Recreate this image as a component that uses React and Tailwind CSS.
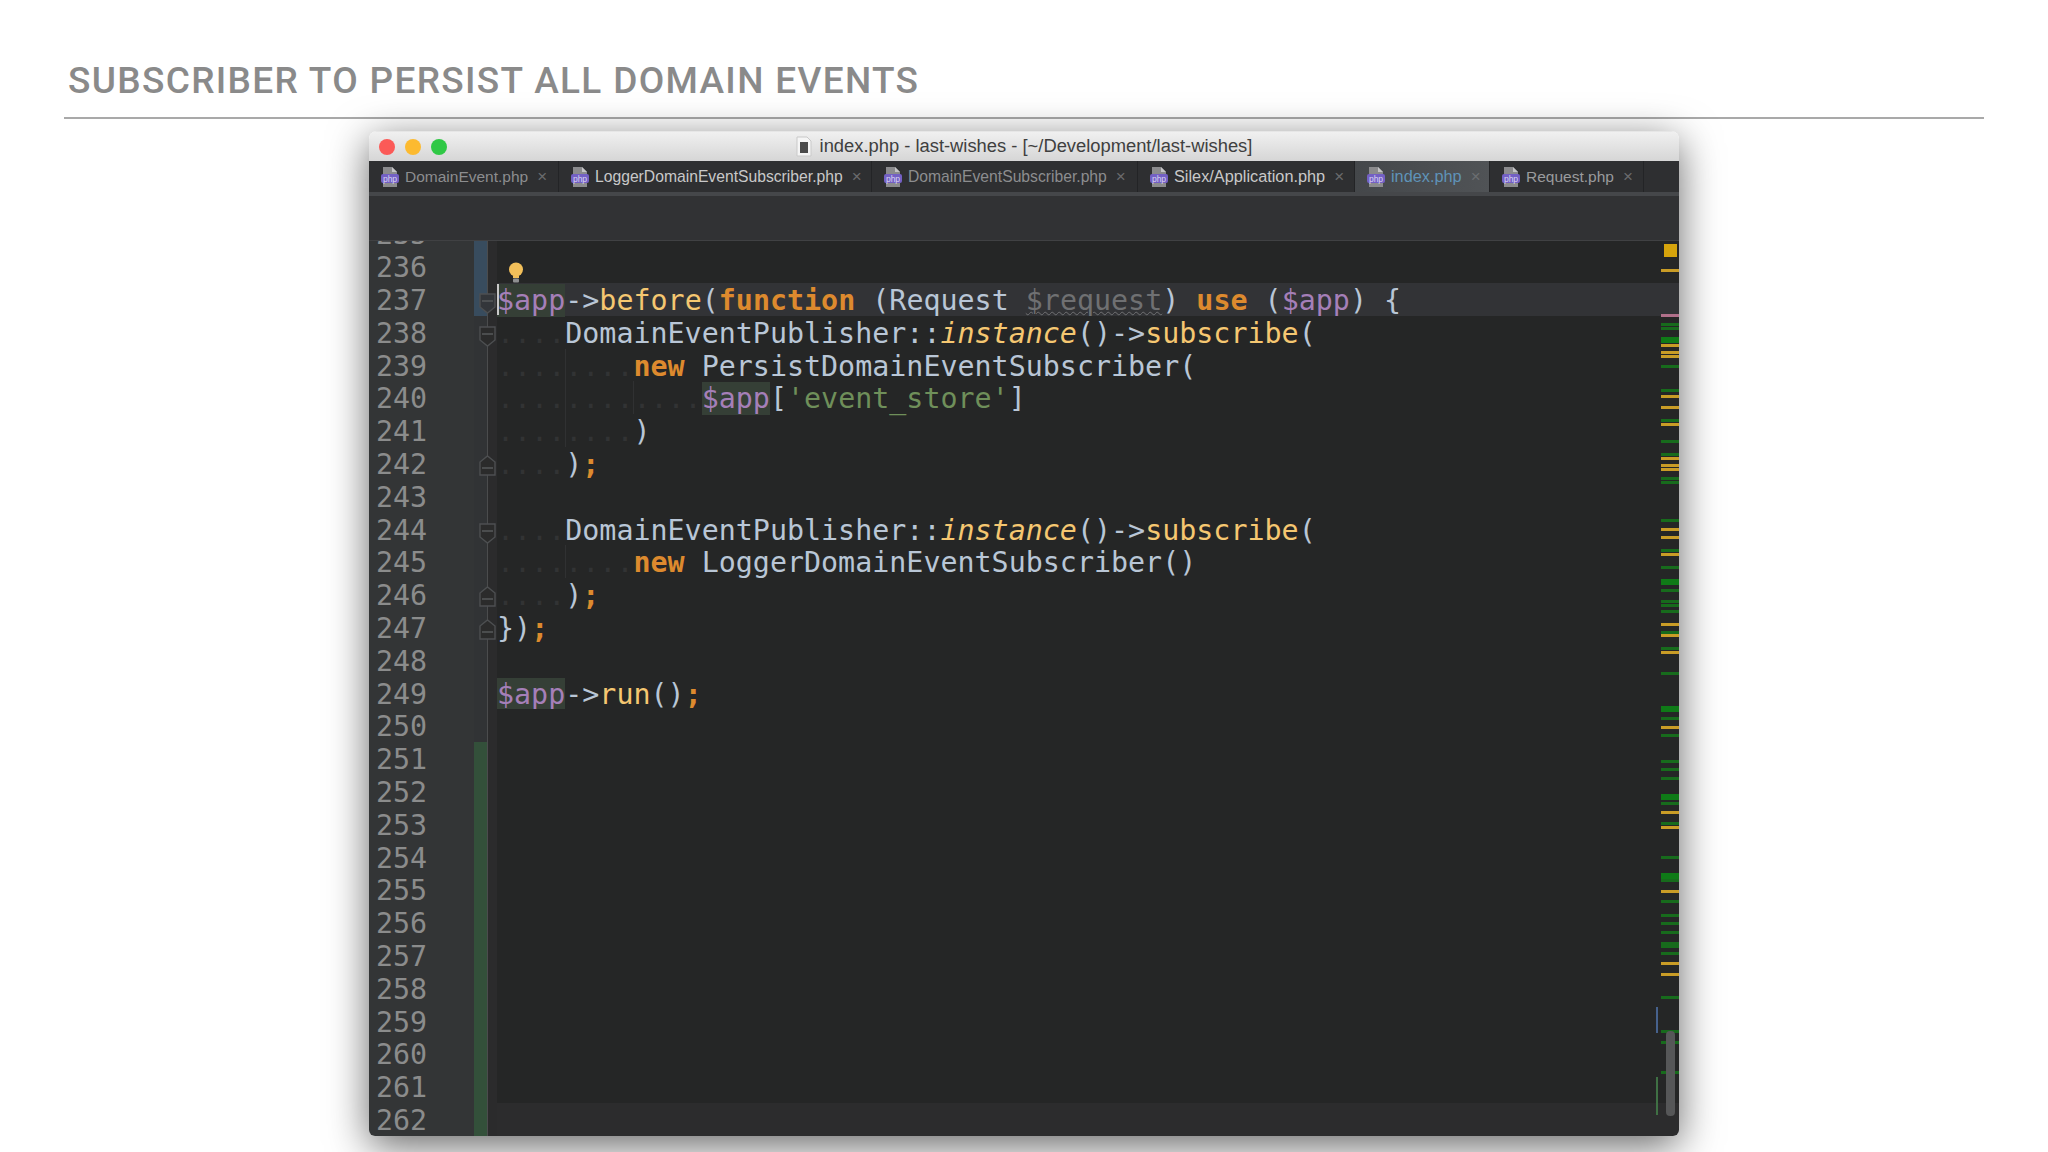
const tabs = [
  { name: "DomainEvent.php", w: "w-[190px]", size: "text-[15.5px]", text: "text-[#8c8d8f]" },
  { name: "LoggerDomainEventSubscriber.php", w: "w-[313px]", size: "text-[15.7px]", text: "text-[#c9c9c9]" },
  { name: "DomainEventSubscriber.php", w: "w-[266px]", size: "text-[15.7px]", text: "text-[#8c8d8f]" },
  { name: "Silex/Application.php", w: "w-[217px]", size: "text-[16.3px]", text: "text-[#c9c9c9]" },
  { name: "index.php", w: "w-[135px]", size: "text-[16.3px]", text: "text-[#5f93b8]", active: true },
  { name: "Request.php", w: "w-[154px]", size: "text-[15.5px]", text: "text-[#9a9b9d]" },
];

const yellowMarks = [270, 345, 352, 356, 396, 407, 424, 458, 465, 469, 529, 537, 554, 624, 635, 652, 727, 812, 827, 891, 963, 974];
const greenMarks = [324, 328, 366, 390, 420, 441, 454, 478, 482, 520, 550, 567, 590, 601, 605, 611, 632, 648, 673, 718, 735, 761, 769, 778, 803, 823, 857, 880, 901, 915, 923, 932, 943, 946, 953, 997, 1031, 1042, 1072];
const thickGreen = [337, 579, 706, 794, 873];

function PhpIcon() {
  return (
    <svg width="18" height="22" viewBox="0 0 18 22" className="shrink-0">
      <path d="M2 1h9l5 5v15H2z" fill="#8b8b8d" />
      <path d="M11 1v5h5z" fill="#c4c4c6" />
      <rect x="0" y="8" width="18" height="9" rx="2" fill="#7360c4" />
      <text x="9" y="15.500" textAnchor="middle" fontSize="8.500" fill="#d9d4f2" fontFamily="Liberation Sans, sans-serif">php</text>
    </svg>
  );
}

function Tab({ t }) {
  return (
    <div className={`${t.w} pl-[12px] h-full shrink-0 flex items-center border-r border-[#232426] ${t.active ? "bg-gradient-to-r from-[#44474a] to-[#505356]" : "bg-[#2e2f31]"}`}>
      <PhpIcon />
      <span className={`ml-[6px] ${t.size} leading-none whitespace-nowrap ${t.text}`}>{t.name}</span>
      <span className={`ml-[9px] text-[17px] leading-none ${t.active ? "text-[#6b6e71]" : "text-[#6a6b6d]"}`}>×</span>
    </div>
  );
}

function Fold({ kind, dark }) {
  const d = kind === "start" ? "M1 1h15v13l-7.5 6L1 14z" : "M1 20h15V7L8.500 1 1 7z";
  const line = kind === "start" ? "M3 8h11" : "M3 13h11";
  return (
    <svg width="17" height="21" viewBox="0 0 17 21" className={`absolute left-[110px] ${kind === "start" ? "top-[10px]" : "top-[8px]"}`}>
      <path d={d} fill={dark ? "#33363a" : "#2b2b2b"} stroke="#4d4f51" strokeWidth="1.4" />
      <path d={line} stroke="#5a5c5e" strokeWidth="1.4" />
    </svg>
  );
}

const K = ({ c }) => <span className="font-bold text-[#dd8a2e]">{c}</span>;
const F = ({ c }) => <span className="text-[#f5c771]">{c}</span>;
const I = ({ c }) => <span className="italic text-[#f5c771]">{c}</span>;
const P = ({ c }) => <span className="text-[#b9c6d6]">{c}</span>;
const V = ({ c }) => <span className="text-[#a57fb8]">{c}</span>;
const H = () => <span className="text-[#a57fb8] bg-[#353f36]">$app</span>;
const D = ({ n }) => <span className="text-[#323334]">{".".repeat(n)}</span>;
const Semi = () => <span className="font-bold text-[#dd8a2e]">;</span>;

const code = {
  237: <><H /><P c="->" /><F c="before" /><P c="(" /><K c="function" /><P c=" (Request " /><span className="text-[#6f7072] underline decoration-wavy decoration-[#6f7072] decoration-1">$request</span><P c=") " /><K c="use" /><P c=" (" /><V c="$app" /><P c=") {" /></>,
  238: <><D n={4} /><P c="DomainEventPublisher::" /><I c="instance" /><P c="()->" /><F c="subscribe" /><P c="(" /></>,
  239: <><D n={8} /><K c="new" /><P c=" PersistDomainEventSubscriber(" /></>,
  240: <><D n={12} /><H /><P c="[" /><span className="text-[#6f8f5a]">'event_store'</span><P c="]" /></>,
  241: <><D n={8} /><P c=")" /></>,
  242: <><D n={4} /><P c=")" /><Semi /></>,
  244: <><D n={4} /><P c="DomainEventPublisher::" /><I c="instance" /><P c="()->" /><F c="subscribe" /><P c="(" /></>,
  245: <><D n={8} /><K c="new" /><P c=" LoggerDomainEventSubscriber()" /></>,
  246: <><D n={4} /><P c=")" /><Semi /></>,
  247: <><P c="})" /><Semi /></>,
  249: <><H /><P c="->" /><F c="run" /><P c="()" /><Semi /></>,
};

const folds = {
  237: { kind: "start", dark: true },
  238: { kind: "start" },
  242: { kind: "end" },
  244: { kind: "start" },
  246: { kind: "end" },
  247: { kind: "end" },
};

const guides = { 239: [68], 240: [68, 136], 241: [68], 245: [68] };

function Row({ n }) {
  const change = n <= 237 ? "bg-[#384c5e]" : n >= 251 ? "bg-[#33503a]" : "bg-[#313335]";
  const current = n === 237;
  const bg = current ? "bg-[#323336]" : n === 262 ? "bg-[#2c2c2d]" : "bg-[#252626]";
  const lift = n === 237 || n === 240 ? "z-[1]" : "";
  return (
    <div className="relative flex h-[32.8px] shrink-0">
      <div className="w-[105px] shrink-0 pl-[7px] bg-[#333536] text-[#8b8c8c]">{n}</div>
      <div className={`w-[13px] shrink-0 ${change}`} />
      <div className="w-[1px] shrink-0 bg-[#4b4c4d]" />
      <div className="w-[9px] shrink-0 bg-[#2b2b2c]" />
      <div className={`relative flex-1 whitespace-pre ${bg} ${lift}`}>
        {(guides[n] || []).map((g) => (
          <span key={g} className="absolute top-0 bottom-0 w-[1px] bg-[#303132]" style={{ left: g }} />
        ))}
        {code[n]}
        {current && <span className="absolute left-0 top-[1px] bottom-[1px] w-[2px] bg-[#c8c8c8]" />}
      </div>
      {folds[n] && <Fold {...folds[n]} />}
      {n === 236 && (
        <svg width="16" height="22" viewBox="0 0 16 22" className="absolute left-[139px] top-[12px]">
          <circle cx="8" cy="7.500" r="7" fill="#f3c05a" />
          <rect x="5" y="14" width="6" height="2" fill="#f3c05a" />
          <rect x="5" y="16.500" width="6" height="4" rx="1" fill="#8e8f90" />
        </svg>
      )}
    </div>
  );
}

export default function App() {
  const lines = [];
  for (let i = 235; i <= 262; i++) lines.push(i);
  return (
    <div className="w-[2048px] h-[1152px] overflow-hidden bg-white font-['Liberation_Sans',sans-serif]">
      <div className="pl-[68px] pt-[59px] h-[117px]">
        <h1 className="font-['Roboto',sans-serif] font-medium text-[37px] leading-[44px] tracking-[1.33px] text-[#8a8a8a] whitespace-nowrap">
          SUBSCRIBER TO PERSIST ALL DOMAIN EVENTS
        </h1>
      </div>
      <div className="ml-[64px] w-[1920px] h-[2px] bg-[#a9a9a9]" />
      <div className="ml-[369px] mt-[12px] w-[1310px] h-[1005px] flex flex-col rounded-t-[8px] rounded-b-[6px] shadow-[0_10px_40px_rgba(0,0,0,0.6)] overflow-hidden">
        <div className="relative h-[30px] shrink-0 flex items-center justify-center bg-gradient-to-b from-[#f0f0f0] to-[#d6d6d6] border-t border-[#e6e6e6]">
          <div className="absolute left-[10px] top-0 bottom-0 flex items-center gap-[10px]">
            <span className="w-[16px] h-[16px] rounded-full bg-[#fb5a57]" />
            <span className="w-[16px] h-[16px] rounded-full bg-[#fcba30]" />
            <span className="w-[16px] h-[16px] rounded-full bg-[#2fc845]" />
          </div>
          <svg width="16" height="21" viewBox="0 0 16 21" className="mr-[8px] shrink-0">
            <path d="M1 1h10l4 4v15H1z" fill="#f5f5f5" stroke="#c9c9c9" />
            <rect x="4" y="6" width="8" height="11" fill="#4b4b4b" />
          </svg>
          <span className="text-[18.35px] leading-none text-[#3f3f3f] whitespace-nowrap">index.php - last-wishes - [~/Development/last-wishes]</span>
        </div>
        <div className="h-[31px] shrink-0 flex bg-[#2e2f31]">
          {tabs.map((t) => (
            <Tab key={t.name} t={t} />
          ))}
        </div>
        <div className="h-[4px] shrink-0 bg-[#45474a]" />
        <div className="h-[45px] shrink-0 bg-[#313234] border-b border-[#404143]" />
        <div className="relative flex-1 min-h-0 overflow-hidden font-['DejaVu_Sans_Mono',monospace] text-[28.33px] leading-[36px]">
          <div className="flex flex-col -mt-[23.6px]">
            {lines.map((n) => (
              <Row key={n} n={n} />
            ))}
          </div>
          <span className="absolute z-[2] right-[2px] top-[3px] w-[13px] h-[13px] bg-[#d6a40c]" />
          {greenMarks.map((y) => (
            <span key={y} className="absolute z-[2] right-0 w-[18px] h-[3px] bg-[#176b1c]" style={{ top: y - 242 }} />
          ))}
          {thickGreen.map((y) => (
            <span key={y} className="absolute z-[2] right-0 w-[18px] h-[6px] bg-[#0f7a17]" style={{ top: y - 241 }} />
          ))}
          {yellowMarks.map((y) => (
            <span key={y} className="absolute z-[2] right-0 w-[18px] h-[3px] bg-[#c99c26]" style={{ top: y - 242 }} />
          ))}
          <span className="absolute z-[2] right-0 top-[73px] w-[18px] h-[3px] bg-[#b0708a]" />
          <span className="absolute z-[2] right-[21px] top-[766px] w-[2px] h-[26px] bg-[#46618c]" />
          <span className="absolute z-[2] right-[21px] top-[836px] w-[2px] h-[38px] bg-[#3f7044]" />
          <span className="absolute z-[2] right-[4px] top-[790px] w-[9px] h-[85px] rounded-[4px] bg-[#565758]" />
        </div>
      </div>
    </div>
  );
}
